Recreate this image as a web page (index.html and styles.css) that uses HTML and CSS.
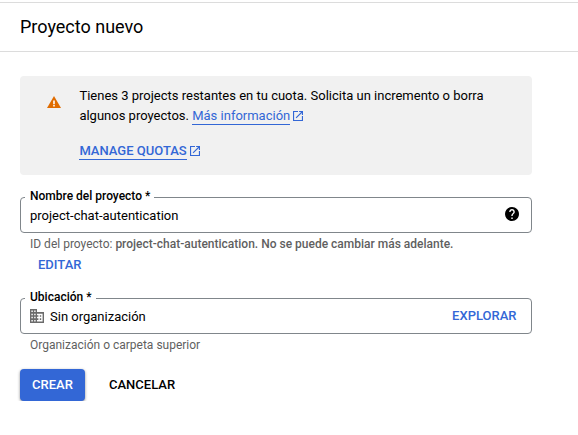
FILE: index.html
```html
<!DOCTYPE html>
<html lang="es">
<head>
<meta charset="utf-8">
<title>Proyecto nuevo</title>
<link rel="stylesheet" href="styles.css">
</head>
<body>
<header class="header"><h1>Proyecto nuevo</h1></header>
<main class="content">
  <section class="notice">
    <svg class="warn" viewBox="0 0 14 12"><path fill="#e06c00" d="M0 12h14L7 0z"/><path fill="#fff" d="M6.200 4.500h1.600v3.700H6.200zM6.200 9h1.600v1.400H6.200z"/></svg>
    <div class="notice-body">
      <p>Tienes 3 projects restantes en tu cuota. Solicita un incremento o borra<br>algunos proyectos. <a class="link" href="#"><span>Más información</span><svg class="ext" viewBox="3 3 18 18"><path d="M19 19H5V5h7V3H3v18h18v-9h-2v7zM14 3v2h3.6l-9.8 9.8 1.4 1.4L19 6.4V10h2V3h-7z"/></svg></a></p>
      <p class="quotas"><a class="link strong" href="#"><span>MANAGE QUOTAS</span><svg class="ext" viewBox="3 3 18 18"><path d="M19 19H5V5h7V3H3v18h18v-9h-2v7zM14 3v2h3.6l-9.8 9.8 1.4 1.4L19 6.4V10h2V3h-7z"/></svg></a></p>
    </div>
  </section>
  <div class="field">
    <span class="label label-name">Nombre del proyecto *</span>
    <span class="value">project-chat-autentication</span>
    <svg class="help" viewBox="2 2 20 20"><path d="M12 2C6.48 2 2 6.48 2 12s4.480 10 10 10 10-4.480 10-10S17.520 2 12 2zm1 17h-2v-2h2v2zm2.070-7.750l-.9.920C13.450 12.900 13 13.500 13 15h-2v-.5c0-1.100.45-2.100 1.170-2.830l1.240-1.260c.37-.36.59-.86.59-1.410 0-1.100-.9-2-2-2s-2 .9-2 2H8c0-2.210 1.790-4 4-4s4 1.790 4 4c0 .88-.36 1.680-.93 2.250z"/></svg>
  </div>
  <p class="hint hint-id">ID del proyecto: <b>project-chat-autentication. No se puede cambiar más adelante.</b></p>
  <button class="text-button edit">EDITAR</button>
  <div class="field">
    <span class="label label-place">Ubicación *</span>
    <svg class="building" viewBox="2 3 20 18" preserveAspectRatio="none"><path d="M12 7V3H2v18h20V7H12zM6 19H4v-2h2v2zm0-4H4v-2h2v2zm0-4H4V9h2v2zm0-4H4V5h2v2zm4 12H8v-2h2v2zm0-4H8v-2h2v2zm0-4H8V9h2v2zm0-4H8V5h2v2zm10 12h-8v-2h2v-2h-2v-2h2v-2h-2V9h8v10zm-2-8h-2v2h2v-2zm0 4h-2v2h2v-2z"/></svg>
    <span class="value">Sin organización</span>
    <button class="text-button browse">EXPLORAR</button>
  </div>
  <p class="hint">Organización o carpeta superior</p>
  <div class="actions">
    <button class="primary">CREAR</button>
    <button class="text-button cancel">CANCELAR</button>
  </div>
</main>
</body>
</html>
```
FILE: styles.css
```css
* { box-sizing: border-box; }
body {
  margin: 0;
  background: #fff;
  color: #000;
  font: 13px/20px Roboto, sans-serif;
}
p, h1 { margin: 0; }
button {
  padding: 0;
  border: 0;
  background: none;
  font: 500 13px/20px Roboto, sans-serif;
}
.header {
  display: flex;
  align-items: center;
  height: 50px;
  margin-top: 2px;
  padding-left: 20px;
  border-top: 1px solid #dcdcdc;
  border-bottom: 1px solid #dcdcdc;
}
h1 { font-size: 18px; font-weight: 400; line-height: 24px; }
.content { width: 512px; margin: 24px 0 0 20px; }
.notice {
  display: flex;
  height: 99px;
  padding: 10px 0 0 27px;
  border-radius: 4px;
  background: #f1f1f1;
}
.warn { width: 14px; height: 12px; margin: 10px 18.4px 0 0; }
.quotas { margin-top: 15px; }
.link { color: #3367d6; text-decoration: none; }
.link span { display: inline-block; line-height: 16px; border-bottom: 1px solid #3367d6; }
.strong { font-weight: 500; }
.ext { width: 10px; height: 10px; margin-left: 3px; fill: #3367d6; position: relative; top: 0.5px; }
.field {
  position: relative;
  display: flex;
  align-items: center;
  height: 36px;
  margin-top: 22px;
  padding: 0 12px 0 9px;
  border: 1px solid #80868b;
  border-radius: 4px;
}
.value { padding-top: 2px; }
.label {
  position: absolute;
  top: -10px;
  left: 4px;
  padding-left: 5px;
  height: 16px;
  line-height: 16px;
  font-size: 12px;
  font-weight: 500;
  background: #fff;
}
.label-name { width: 129px; }
.label-place { width: 71px; }
.help { width: 14px; height: 14px; margin: 0 0 2px auto; }
.building { width: 14px; height: 14px; margin-right: 6px; fill: #6b6b6b; }
.hint { margin: 3px 0 0 10px; font-size: 12px; line-height: 16px; color: #5f5f5f; }
.hint b { font-weight: 500; }
.text-button { color: #3367d6; }
.edit { display: block; margin: 3px 0 0 18px; }
.edit + .field { margin-top: 23px; }
.browse { margin-left: auto; margin-right: 2.5px; }
.actions { display: flex; align-items: center; margin-top: 16px; }
.primary {
  width: 65px;
  height: 32px;
  border-radius: 4px;
  background: #3367d6;
  color: #fff;
  box-shadow: 0 1px 3px rgba(0, 0, 0, .45);
}
.cancel { margin-left: 24px; color: #000; }
```
